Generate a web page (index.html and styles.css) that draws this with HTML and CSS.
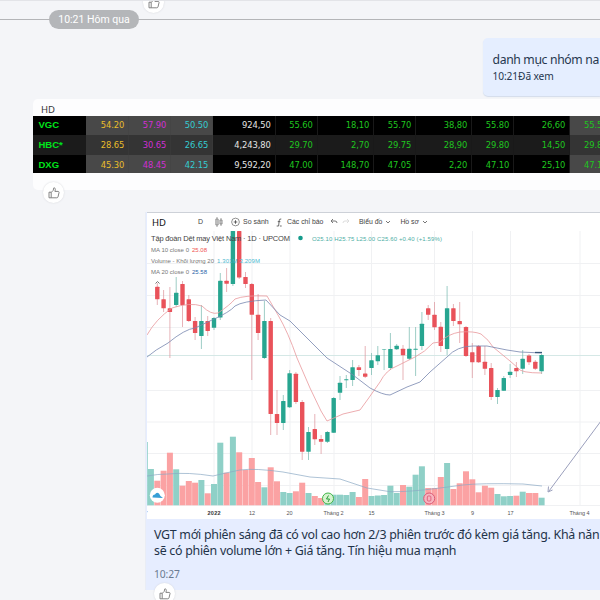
FILE: index.html
```
<!DOCTYPE html>
<html lang="vi">
<head>
<meta charset="utf-8">
<title>Chat</title>
<link rel="stylesheet" href="styles.css">
</head>
<body>
<svg class="defs" width="0" height="0">
  <symbol id="thumb" viewBox="0 0 12 12">
    <path d="M1 5.2h2.2v5.6H1zM3.2 5.4 5.2 3.4 5.8.9C7 .8 7.5 1.6 7.3 2.6L6.9 4.4h3.1c.8 0 1.2.6 1 1.3l-1 4.2c-.2.6-.6.9-1.2.9H3.2" fill="none" stroke="#777" stroke-width=".9" stroke-linejoin="round"/>
  </symbol>
</svg>
<main class="chat">
  <div class="divider"><span class="pill">10:21 Hôm qua</span></div>
  <div class="react react-top"><svg><use href="#thumb"/></svg></div>

  <section class="bubble note">
    <p class="note-text">danh mục nhóm na</p>
    <p class="note-meta">10:21Đã xem</p>
  </section>

  <section class="board">
    <div class="hd">HD</div>
    <div class="quotes">
      <div class="row"><b>VGC</b><i class="g y">54.20</i><i class="g m">57.90</i><i class="g c">50.50</i><i class="w">924,50</i><i>55.60</i><i>18,10</i><i>55.70</i><i>38,80</i><i>55.80</i><i>26,60</i><i class="g last">55.50</i></div>
      <div class="row alt"><b>HBC*</b><i class="g y">28.65</i><i class="g m">30.65</i><i class="g c">26.65</i><i class="w">4,243,80</i><i>29.70</i><i>2,70</i><i>29.75</i><i>28,90</i><i>29.80</i><i>14,50</i><i class="g last">29.85</i></div>
      <div class="row"><b>DXG</b><i class="g y">45.30</i><i class="g m">48.45</i><i class="g c">42.15</i><i class="w">9,592,20</i><i>47.00</i><i>148,70</i><i>47.05</i><i>2,20</i><i>47.10</i><i>25,10</i><i class="g last">47.15</i></div>
    </div>
  </section>
  <div class="react react-board"><svg><use href="#thumb"/></svg></div>

  <section class="post">
    <div class="shot">
      <div class="tools">
        <span class="t-hd">HD</span>
        <span class="t-d">D</span>
        <svg class="t-candle" viewBox="0 0 8 10"><path d="M2 0v10M6 1v8M.8 2h2.4v6H.8zM4.900 3h2.200v4H4.900z" fill="none" stroke="#777" stroke-width=".7"/></svg>
        <span class="t-cmp"><svg viewBox="0 0 10 10"><circle cx="5" cy="5" r="4.3" fill="none" stroke="#666" stroke-width=".8"/><path d="M5 3v4M3 5h4" stroke="#444" stroke-width=".9"/></svg>So sánh</span>
        <span class="t-ind"><svg viewBox="0 0 8 10"><path d="M6 1Q3.8.5 3.6 3L3 9H.8M2 4h3M4.5 9h2" fill="none" stroke="#555"/></svg>Các chỉ báo</span>
        <svg class="t-undo" viewBox="0 0 20 8"><path d="M3 1 1 3l2 2M1 3h4q2 0 2 2" fill="none" stroke="#777"/><path d="m17 1 2 2-2 2m2-2h-4q-2 0-2 2" fill="none" stroke="#ddd"/></svg>
        <span class="t-menu">Biểu đồ<svg viewBox="0 0 6 4"><path d="m1 1 2 2 2-2" fill="none" stroke="#777"/></svg></span>
        <span class="t-menu t-file">Hồ sơ<svg viewBox="0 0 6 4"><path d="m1 1 2 2 2-2" fill="none" stroke="#777"/></svg></span>
      </div>
      <svg class="plot" id="plot" viewBox="147 231 453 288">
        <g id="grid"></g>
        <g id="volumes"></g>
        <g id="candles"></g>
        <path class="ma-red" d="M147 335Q156 319 172 308Q190 302 202 306Q211 315 218 313Q230 305 235 299Q245 295 267 296L278 315Q288 332 297 358L310 388L321 411L327 421L343 414L360 410L368 399L380 382Q386 370 397 366L415 357Q425 352 433 343L440 342Q448 334 460 332Q474 331 481 334Q489 340 493 347L510 361L518 368Q520 373 542 373"/>
        <path class="ma-blue" d="M147 357Q155 350 168 343Q185 329 195 328L212 320Q230 312 235 306Q243 301 266 300L280 315L290 321L307 338L327 358L353 375L370 388Q383 395 390 395L407 387L420 382L430 372L447 357Q457 346 473 346H487L507 350L520 352L542 353"/>
        <path class="ma-vol" d="M147 476Q158 474 168 474Q188 472 213 476Q225 473 240 470Q255 468 283 472L310 477L340 479L367 488L390 491.7Q410 492 440 488L463 485Q480 483 523 484L542 486"/>
        <path class="last-ma" d="M535 352.5h7"/>
        <path class="arrow" d="M601 421 549 491M548.5 486.5 548 492 552.5 490"/>
        <circle cx="157.300" cy="495.300" r="7.500" fill="#fff"/>
        <path d="M152.500 497.500q0-3 2.500-3 1.500-3 4-1 1 3 4 4.500z" fill="#369fd6"/>
        <circle class="mark-g" cx="328" cy="498.500" r="5.500"/><path d="m328.500 495.500-2 3.500h3l-1.500 3" fill="none" stroke="#2a9d3a"/>
        <circle class="mark-r" cx="429.200" cy="498.500" r="5.500"/><rect x="427.300" y="496" width="3.600" height="5" rx="1" fill="none" stroke="#e0637d"/>
        <g class="legend">
          <text x="151" y="241" textLength="139" class="name">Tập đoàn Dệt may Việt Nam · 1D · UPCOM</text>
          <circle cx="300.500" cy="238" r="2.300" fill="#149b8b"/>
          <text x="312" y="241" textLength="130" class="teal">O25.10 H25.75 L25.00 C25.60 +0.40 (+1.59%)</text>
          <text x="151" y="251.500" textLength="38">MA 10 close 0</text><text x="192" y="251.500" textLength="15" class="val-red">25.08</text>
          <text x="151" y="262.500" textLength="63">Volume - Khối lượng 20</text><text x="217" y="262.500" textLength="43" class="val-cyan">1.301M 3.209M</text>
          <text x="151" y="273.500" textLength="38">MA 20 close 0</text><text x="192" y="273.500" textLength="15" class="val-blue">25.58</text>
          <path d="m155.500 283.500 2-2 2 2" fill="none" stroke="#777"/>
        </g>
        <g class="axis">
          <text x="147" y="514.500">'</text>
          <text x="214" y="514.500" class="yr" textLength="13">2022</text><text x="252" y="514.500">12</text><text x="289.500" y="514.500">20</text>
          <text x="333.500" y="514.500" textLength="20">Tháng 2</text><text x="371.500" y="514.500">15</text><text x="434.500" y="514.500" textLength="20">Tháng 3</text>
          <text x="472.500" y="514.500">9</text><text x="510.500" y="514.500">17</text><text x="579.500" y="514.500" textLength="20">Tháng 4</text>
        </g>
      </svg>
    </div>
    <p class="caption">VGT mới phiên sáng đã có vol cao hơn 2/3 phiên trước đó kèm giá tăng. Khả năn<br>sẽ có phiên volume lớn + Giá tăng. Tín hiệu mua mạnh</p>
    <p class="time">10:27</p>
  </section>
  <div class="react react-post"><svg><use href="#thumb"/></svg></div>
</main>
<script src="chart.js"></script>
</body>
</html>
```
FILE: styles.css
```
* { box-sizing: border-box; }
body { margin: 0; width: 600px; height: 600px; overflow: hidden; background: #f4f5f8; font-family: "Noto Sans", "Open Sans", sans-serif; }
p { margin: 0; }
.defs { display: block; position: absolute; }
.chat { position: relative; height: 600px; overflow: hidden; display: flex; flex-direction: column; align-items: flex-start; border-top: 1px solid #e3e4e8; }
.divider { width: 600px; height: 37px; flex: none; padding: 9px 0 0 49px; background: linear-gradient(#b4b5b8, #b4b5b8) 0 18px / 100% 1px no-repeat; }
.pill { display: block; width: 90px; height: 19px; border-radius: 10px; background: #b4b6b9; color: #fff; font: 10.5px/20px Roboto, sans-serif; text-align: center; white-space: nowrap; }
.react { position: absolute; width: 21px; height: 21px; border-radius: 50%; background: #fff; box-shadow: 0 0 2px #d4d6da; display: flex; align-items: center; justify-content: center; }
.react svg { width: 12px; height: 12px; }
.react-top { left: 143px; top: -9px; }
.react-board { left: 43px; top: 181px; }
.react-post { left: 154px; top: 582px; }

.bubble { background: #e5eeff; border-radius: 5px 0 0 5px; box-shadow: 0 1px 1px #d3dcea; }
.note { width: 117px; height: 58px; flex: none; margin-left: 483px; padding: 13px 0 0 9.500px; color: #26374f; white-space: nowrap; overflow: hidden; }
.note-text { font-size: 12.200px; line-height: 18px; letter-spacing: -.34px; }
.note-meta { font-size: 10.200px; line-height: 15px; letter-spacing: -.1px; }

.board { width: 567px; height: 91px; flex: none; margin: 3px 0 0 33px; background: #fdfdfe; border-radius: 5px 0 0 5px; }
.hd { height: 17px; padding-left: 8px; font-size: 9.500px; line-height: 21px; color: #333; }
.quotes { overflow: hidden; background: #000; }
.row { display: grid; grid-template-columns: 52.500px 43.500px 42px 42px 62.500px 42px 56.500px 42px 56px 42px 56px 43px; height: 18.500px; font: 9.300px/17px "DejaVu Sans Condensed", "DejaVu Sans", sans-serif; color: #1fc51f; background: #000; }
.row.alt { height: 20.500px; line-height: 20px; background: #1b1b1b; }
.row:last-child { height: 18px; line-height: 20px; }
.row b { padding-left: 5.500px; font-family: "Liberation Sans", sans-serif; font-size: 9.500px; color: #00e51b; }
.row i { font-style: normal; text-align: right; padding-right: 3.700px; letter-spacing: -.08px; border-right: 1px solid #191919; }
.row .g { background: #484848; border-color: #454545; }
.row.alt .g { background: #343434; border-color: #383838; }
.row .y { color: #e9bd2b; }
.row .m { color: #cf2fd2; }
.row .c { color: #35cbd0; }
.row .w { color: #e4e4e4; }
.row .last { padding: 0 0 0 14px; text-align: left; }

.post { width: 455px; height: 378px; flex: none; margin: 22px 0 0 145px; background: #e6edff; border-left: 1px solid #e9edf5; }
.shot { margin-left: 1px; width: 453px; height: 307px; background: #fff; border-top: 1px solid #cdd1d8; }
.tools { height: 18px; display: flex; align-items: center; font: 7px/18px "Liberation Sans", sans-serif; color: #444; white-space: nowrap; }
.tools span { display: flex; align-items: center; }
.tools .t-hd { width: 51px; padding: 2px 0 0 5px; font: 9.500px/18px "Noto Sans", sans-serif; color: #111; }
.t-d { width: 17px; }
.t-candle { width: 8px; height: 10px; }
.t-cmp { width: 38px; margin-left: 8px; gap: 3px; }
.t-cmp svg { width: 9px; height: 10px; }
.t-ind { width: 46px; margin-left: 7px; gap: 4px; font-size: 6.900px; }
.t-ind svg { width: 7px; height: 9px; flex: none; }
.t-undo { width: 20px; height: 8px; margin-left: 8px; }
.t-menu { gap: 3px; margin-left: 9px; font-size: 6.900px; }
.t-menu svg { width: 6px; height: 4px; }
.t-file { margin-left: 9px; }
.plot { display: block; width: 453px; height: 288px; }
.grid-line { stroke: #f0f1f3; stroke-width: 1; }
.price-line { stroke: #d5e8e6; stroke-width: 1; }
.up { fill: #27a590; } .down { fill: #e9525a; }
.wick-up { stroke: #74b8ad; stroke-width: .7; } .wick-down { stroke: #dc9299; stroke-width: .7; }
.vol-up { fill: #8fd0c7; } .vol-down { fill: #fba2a3; }
.ma-red, .ma-blue, .ma-vol, .last-ma, .arrow { fill: none; }
.ma-red { stroke: #e9989c; stroke-width: .8; }
.ma-blue { stroke: #7786ae; stroke-width: .8; }
.ma-vol { stroke: #8ba9c4; stroke-width: .7; }
.last-ma { stroke: #365778; stroke-width: 1.300; }
.arrow { stroke: #8e94b4; stroke-width: .9; }
.mark-g { fill: #d6f3cf; stroke: #43b649; }
.mark-r { fill: #f7b5bf; stroke: #db5a76; }
.legend text { font: 6px "Liberation Sans", sans-serif; fill: #777; }
.legend .val-red { fill: #ef5350; }
.legend .val-cyan { fill: #4bb8d0; }
.legend .val-blue { fill: #2a63a8; }
.legend .name { font-size: 7.500px; fill: #444; }
.legend .teal { fill: #4daea5; }
.axis text { font: 5.500px "Liberation Sans", sans-serif; fill: #555; text-anchor: middle; }
.axis .yr { font-weight: bold; fill: #333; }

.caption { margin: 8px 0 0 8px; font-size: 12.400px; line-height: 16px; letter-spacing: -.27px; color: #1f3349; white-space: nowrap; }
.time { margin: 8px 0 0 8px; font-size: 10.300px; line-height: 14px; color: #6b7a90; letter-spacing: -.1px; }
```
FILE: chart.js
```
// Each candle: direction, body top, body bottom, wick top, wick bottom, volume top.
const data = [
  ['d',286.7,299.3,283,305,480.7],['d',299.3,308.3,290,312,470.7],['d',308.3,312,287,358,452.7],['u',292.7,305,277,307,469.3],
  ['d',284,305,281,327,485.7],['d',299.3,321,295,322,481],['d',321,333,317,340,482.7],['u',321,336,305,349,480],
  ['d',321,331,316,336,493.3],['u',318,327.7,317,330,484],['u',280.7,317.5,273,320,442.7],['d',280.7,283.7,268,292,472.7],
  ['u',231,284,231,286,436.7],['d',231,277.5,231,279,452.3],['d',277,284,272,288,470],['d',284,314.7,283,380,458],
  ['d',314.7,333,294,340,482],['u',321,358,301,359,487.3],['d',321,414,318,435,467.3],['d',414,423,390,435,481.3],
  ['u',401,423,395,430,492],['u',373.3,407.3,370,408,493],['d',373.7,402,372,404,491.3],['d',402,451.7,400,460,482.7],
  ['u',432,451.7,427,460,493],['d',429,439.3,414,445,496],['d',439,441.7,435,454,498],['u',432,441.7,431,443,497],
  ['u',398,432.7,397,433,494.7],['u',382.7,392.7,376,400,494.7],['u',379.3,380.3,375,388,495],['u',367.3,380,360,386,492],
  ['d',367.3,370,365,376,497],['d',373.5,376.7,346,378,479],['u',360.3,368,353,375,496],['u',355.3,361.3,346,365,495.5],
  ['u',349,349.5,349,370,495],['u',349,368,333,370,485.7],['u',345.7,349.3,344,350,493],['d',348.7,355.3,345,380,485],
  ['u',348.7,358.7,327,360,486.7],['u',348.7,349.7,327,376,474.7],['u',323.7,346,312,350,466.3],['d',308.3,314.7,305,320,488],
  ['d',314.7,327.3,302,330,488],['d',326.7,346,322,352,477],['u',308.3,349,286,355,463],['d',308.3,321,304,326,489],
  ['d',321,324.3,302,343,483.3],['d',327,356,326,357,471.3],['d',352.3,362.3,343,378,479.3],['d',346,362.3,345,363,492.3],
  ['d',361.7,368.7,346,375,485.7],['d',368,397,363,400,487.7],['u',390,397,388,404,494],['u',378,390.7,376,391,496.3],
  ['u',371.7,375,364,378,496],['d',368,371.3,362,377,495.7],['u',358.7,368.7,350,374,491.7],['d',355.5,362.3,354,365,493],
  ['d',361.7,368.7,360,370,493],['u',355,371.3,354,374,497.7]
];
const NS = 'http://www.w3.org/2000/svg';
const add = (parent, tag, attrs) => {
  const el = document.createElementNS(NS, tag);
  for (const k in attrs) el.setAttribute(k, attrs[k]);
  document.getElementById(parent).appendChild(el);
};
for (const x of [214, 252, 290, 334, 371.5, 434.5, 472.5, 510.5, 580])
  add('grid', 'line', { x1: x, x2: x, y1: 231, y2: 505, class: 'grid-line' });
for (const y of [263.5, 295.5, 327.5, 390.5, 422, 453.5, 485.5, 505.5])
  add('grid', 'line', { x1: 147, x2: 600, y1: y, y2: y, class: 'grid-line' });
add('grid', 'line', { x1: 147, x2: 600, y1: 355.5, y2: 355.5, class: 'price-line' });
add('volumes', 'rect', { x: 147, y: 442, width: 0.8, height: 63.3, class: 'vol-up' });
add('volumes', 'rect', { x: 147.8, y: 469, width: 6.1, height: 36.3, class: 'vol-up' });
data.forEach(([dir, top, bottom, high, low, vol], i) => {
  const x = 157.3 + 6.3 * i;
  const kind = dir === 'u' ? 'up' : 'down';
  add('volumes', 'rect', { x: x - 3, y: vol, width: 6, height: 505.3 - vol, class: 'vol-' + kind });
  add('candles', 'line', { x1: x, x2: x, y1: high, y2: low, class: 'wick-' + kind });
  add('candles', 'rect', { x: x - 2.2, y: top, width: 4.4, height: bottom - top, rx: 0.5, class: kind });
});
```
